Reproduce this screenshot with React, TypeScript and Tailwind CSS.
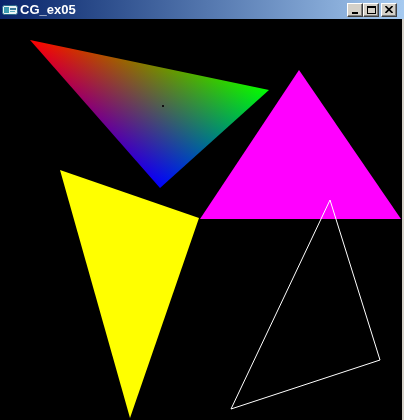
import React from "react";

function Btn({ children }: { children: React.ReactNode }) {
  return (
    <div className="w-[16px] h-[14px] bg-[#d4d0c8] border-t border-l border-t-white border-l-white border-b border-r border-b-[#404040] border-r-[#404040] flex items-center justify-center shadow-[inset_-1px_-1px_0_#808080]">
      {children}
    </div>
  );
}

export default function App() {
  return (
    <div className="w-[404px] h-[420px] bg-black flex flex-col overflow-hidden">
      <div className="h-[19px] flex items-center bg-gradient-to-r from-[#0a246a] to-[#a6caf0] pl-[2px] pr-[7px] shrink-0">
        <svg width="16" height="14" viewBox="0 0 16 14" className="shrink-0">
          <rect x="0.5" y="2.5" width="15" height="9" rx="2" fill="#e8f4f4" stroke="#2a6a8a" />
          <rect x="2" y="4" width="5" height="6" fill="#3a9ab0" />
          <rect x="8" y="5" width="6" height="2" fill="#3a7a9a" />
          <rect x="8" y="8" width="5" height="1" fill="#5aaac0" />
        </svg>
        <span className="ml-[2px] text-white font-bold text-[13px] leading-none font-['Liberation_Sans',sans-serif]">
          CG_ex05
        </span>
        <div className="ml-auto flex items-center">
          <Btn>
            <div className="w-[6px] h-[2px] bg-black mt-[6px] -ml-[1px]" />
          </Btn>
          <Btn>
            <div className="w-[9px] h-[8px] border border-black border-t-2" />
          </Btn>
          <div className="w-[2px]" />
          <Btn>
            <svg width="8" height="7" viewBox="0 0 8 7">
              <path d="M0.5 0 L7.5 7 M7.5 0 L0.5 7" stroke="black" strokeWidth="1.6" />
            </svg>
          </Btn>
        </div>
      </div>
      <div className="flex-1 flex flex-row">
        <svg width="402" height="401" viewBox="0 19 402 401" className="block shrink-0">
          <defs>
            <linearGradient id="gr" gradientUnits="userSpaceOnUse" x1="30" y1="40" x2="161.69" y2="186.48">
              <stop offset="0" stopColor="#ff0000" />
              <stop offset="1" stopColor="#000000" />
            </linearGradient>
            <linearGradient id="gg" gradientUnits="userSpaceOnUse" x1="269" y1="90" x2="158.88" y2="186.73">
              <stop offset="0" stopColor="#00ff00" />
              <stop offset="1" stopColor="#000000" />
            </linearGradient>
            <linearGradient id="gb" gradientUnits="userSpaceOnUse" x1="160" y1="188" x2="184.21" y2="72.26">
              <stop offset="0" stopColor="#0000ff" />
              <stop offset="1" stopColor="#000000" />
            </linearGradient>
          </defs>
          <g className="isolate">
            <polygon points="30,40 269,90 160,188" fill="url(#gr)" className="mix-blend-screen" />
            <polygon points="30,40 269,90 160,188" fill="url(#gg)" className="mix-blend-screen" />
            <polygon points="30,40 269,90 160,188" fill="url(#gb)" className="mix-blend-screen" />
          </g>
          <rect x="162" y="105" width="2" height="2" fill="#101010" />
          <polygon points="299,70 200,219 401,219" fill="#ff00ff" />
          <polygon points="60,170 199,218 130,418" fill="#ffff00" />
          <polygon points="330,200 380,360 231,409" fill="none" stroke="#ffffff" strokeWidth="1" />
        </svg>
        <div className="flex-1 bg-[#d4d0c8]" />
      </div>
    </div>
  );
}
